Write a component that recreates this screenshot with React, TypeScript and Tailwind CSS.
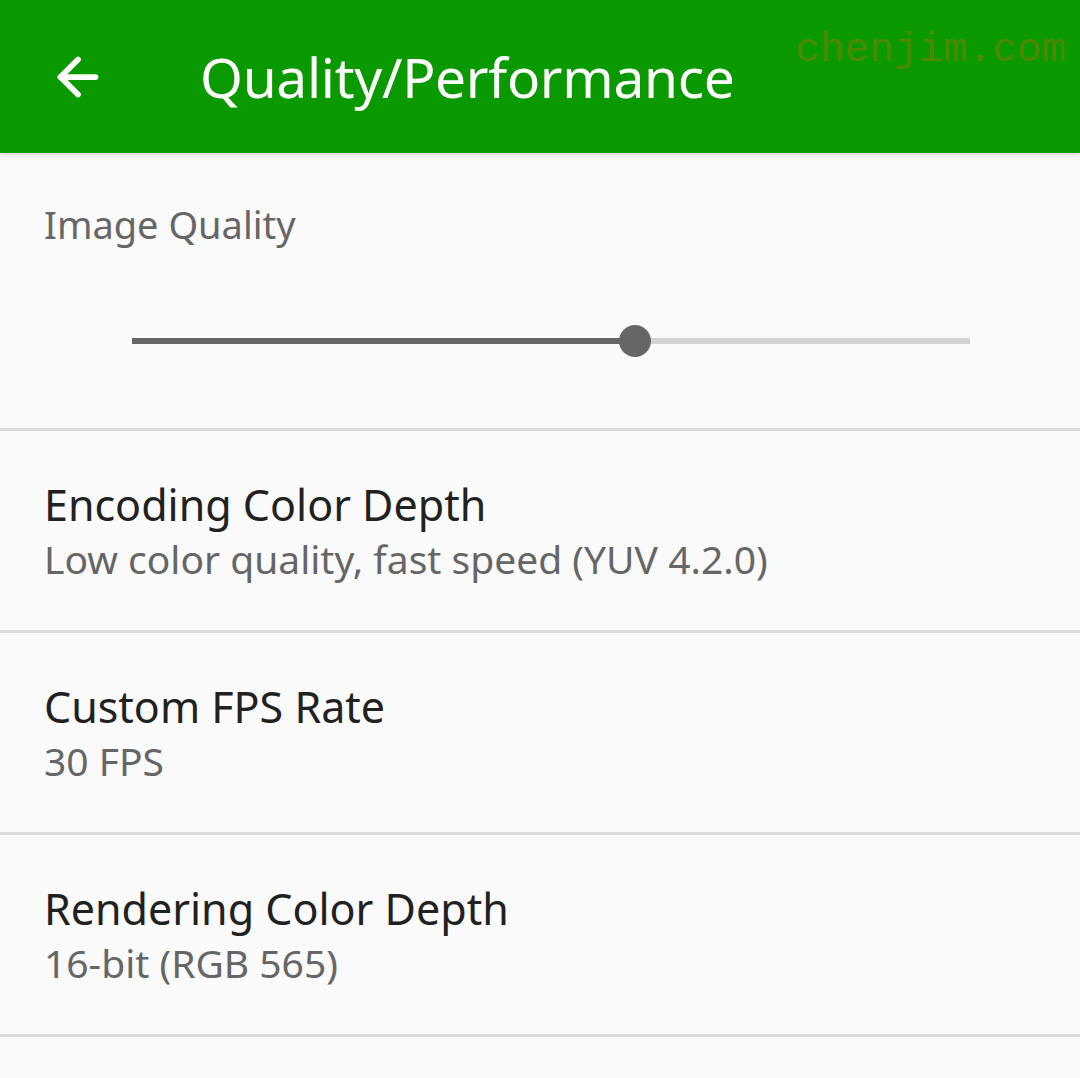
import { ArrowLeft } from 'lucide-react';

const rows = [
  { title: 'Encoding Color Depth', value: 'Low color quality, fast speed (YUV 4.2.0)' },
  { title: 'Custom FPS Rate', value: '30 FPS' },
  { title: 'Rendering Color Depth', value: '16-bit (RGB 565)' },
];

function QualitySlider({ value }: { value: number }) {
  return (
    <div className="relative h-8 flex items-center">
      <div className="h-[6px] w-full bg-[#d3d3d3]" />
      <div className="absolute left-0 h-[6px] bg-[#666666]" style={{ width: `${value}%` }} />
      <div
        className="absolute w-8 h-8 rounded-full bg-[#666666] -translate-x-1/2"
        style={{ left: `${value}%` }}
      />
    </div>
  );
}

export default function App() {
  return (
    <div className="w-[1080px] h-[1078px] overflow-hidden bg-[#fafafa] font-['Noto_Sans',sans-serif]">
      <header className="relative h-[153px] bg-[#0a9a00] flex items-center shadow-[0_2px_6px_rgba(0,0,0,0.12)]">
        <ArrowLeft className="ml-[48px] text-white" size={60} strokeWidth={2.3} />
        <h1 className="ml-[92px] text-[55px] text-white leading-none tracking-[-0.3px]">Quality/Performance</h1>
        <span className="absolute right-[14px] top-[20px] font-['Liberation_Mono',monospace] text-[41px] text-[#4d8a00]">
          chenjim.com
        </span>
      </header>

      <section className="h-[278px] border-b-[3px] border-[#dcdcdc] pt-[52px]">
        <div className="px-[44px] text-[38px] text-[#666666] leading-none">Image Quality</div>
        <div className="pl-[132px] pr-[110px] mt-[82px]">
          <QualitySlider value={60} />
        </div>
      </section>

      {rows.map((row) => (
        <div key={row.title} className="h-[202px] border-b-[3px] border-[#dcdcdc] px-[44px] flex flex-col justify-center">
          <div className="text-[43px] text-[#212121] leading-[56px]">{row.title}</div>
          <div className="text-[39px] text-[#666666] leading-[52px]">{row.value}</div>
        </div>
      ))}
    </div>
  );
}
